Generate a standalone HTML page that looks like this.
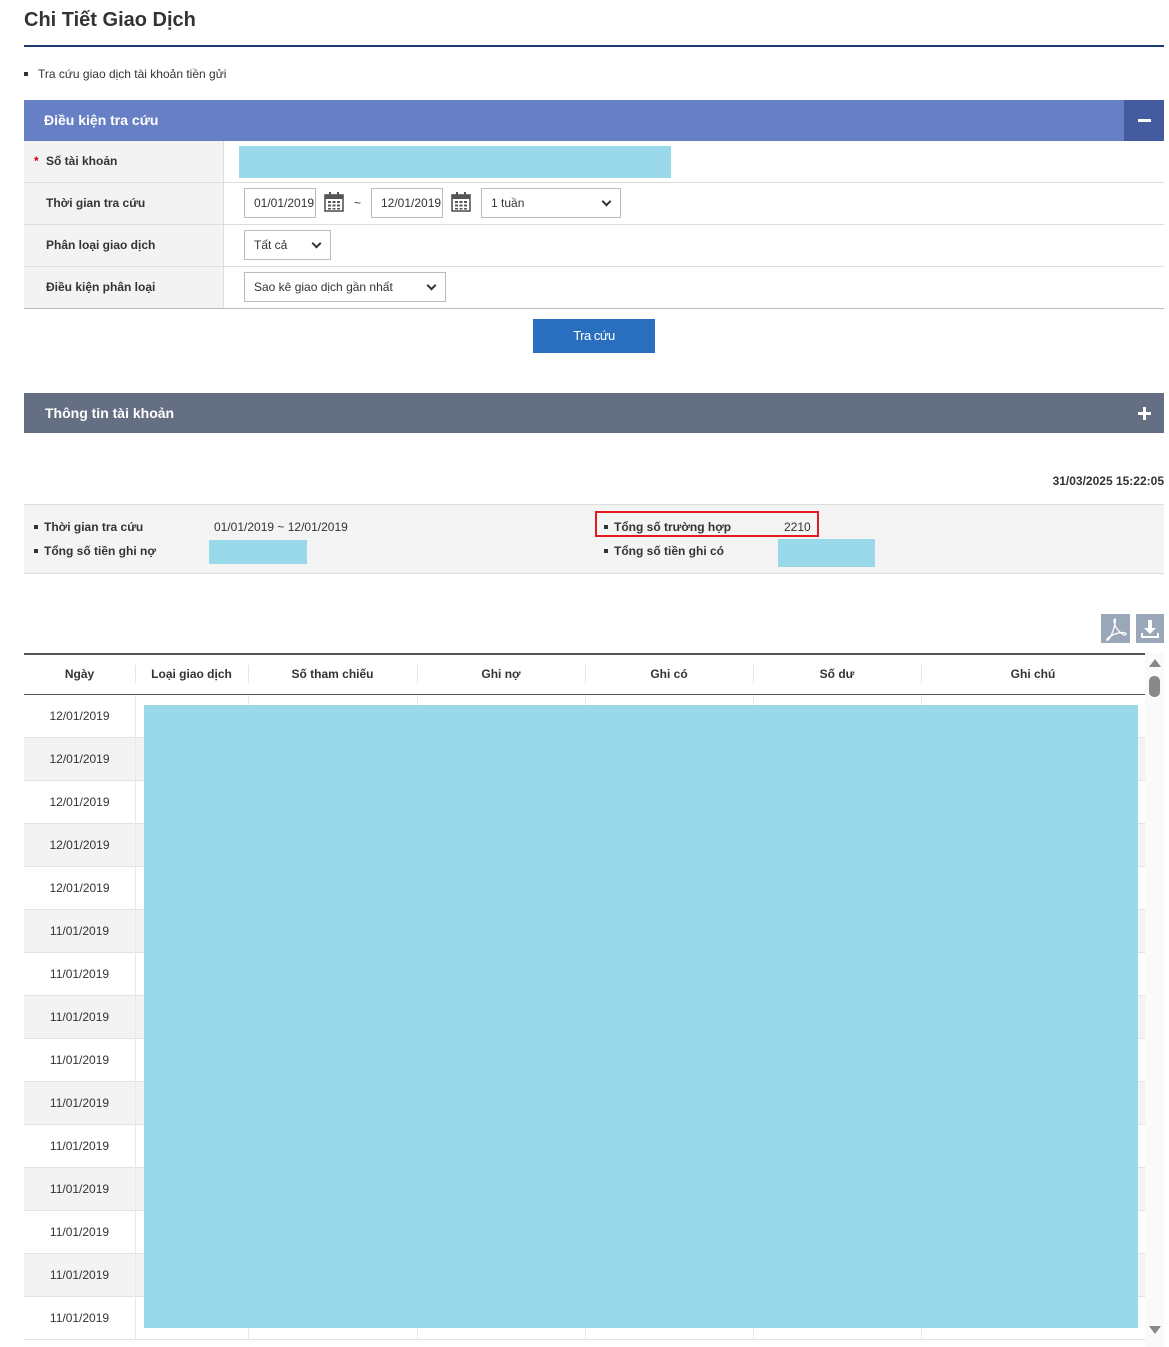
<!DOCTYPE html>
<html><head><meta charset="utf-8">
<style>
*{margin:0;padding:0;box-sizing:border-box}
body{width:1169px;height:1347px;background:#fff;font-family:"Liberation Sans",sans-serif;color:#333;position:relative;overflow:hidden;font-size:12px}
.a{position:absolute}
.b{font-weight:bold}
.sq{display:inline-block;width:4px;height:4px;background:#333;vertical-align:middle;margin-right:6px;position:relative;top:-1px}
.lbl{left:24px;width:200px;background:#f3f3f3;border-bottom:1px solid #ddd;border-right:1px solid #ddd;height:42px;line-height:40px;padding-left:22px;font-weight:bold;color:#333}
.row{left:224px;width:940px;border-bottom:1px solid #ddd;height:42px}
.inp{border:1px solid #bbb;height:30px;line-height:28px;padding-left:9px;background:#fff;font-size:12px;color:#333}
.chev{position:absolute;right:10px;top:9px;width:7px;height:7px;border-right:2px solid #333;border-bottom:2px solid #333;transform:rotate(45deg)}
.cal{width:20px;height:20px}
.th{top:653px;height:42px;line-height:42px;text-align:center;font-weight:bold;color:#333}
.sep{top:665px;width:1px;height:18px;background:#e5e5e5}
.r{left:24px;width:1121px;height:43px;border-bottom:1px solid #e2e2e2}
.d{left:24px;width:111px;text-align:center;line-height:43px;color:#333}
.vl{top:695px;width:1px;height:645px;background:#e8e8e8}
</style></head><body>
<div class="a" style="left:24px;top:9px;font-size:20px;font-weight:bold;color:#333">Chi Tiết Giao Dịch</div>
<div class="a" style="left:24px;top:45px;width:1140px;height:2px;background:#1f3a6e"></div>
<div class="a" style="left:24px;top:67px;font-size:12px;color:#333"><span class="sq" style="margin-right:10px"></span>Tra cứu giao dịch tài khoản tiền gửi</div>

<div class="a" style="left:24px;top:100px;width:1140px;height:41px;background:#677fc4"></div>
<div class="a b" style="left:44px;top:112px;color:#fff;font-size:14px">Điều kiện tra cứu</div>
<div class="a" style="left:1124px;top:100px;width:40px;height:41px;background:#445c9f"></div>
<div class="a" style="left:1138px;top:119px;width:13px;height:3px;background:#fff"></div>

<div class="a lbl" style="top:141px;padding-left:22px"><span style="color:#c00;position:absolute;left:10px">*</span>Số tài khoản</div>
<div class="a row" style="top:141px"></div>
<div class="a" style="left:239px;top:146px;width:432px;height:32px;background:#9ad9e9"></div>

<div class="a lbl" style="top:183px">Thời gian tra cứu</div>
<div class="a row" style="top:183px"></div>
<div class="a inp" style="left:244px;top:188px;width:72px">01/01/2019</div>
<svg class="a cal" style="left:324px;top:192px" viewBox="0 0 20 20"><rect x="1" y="3" width="18" height="16" fill="none" stroke="#555" stroke-width="1.6"/><rect x="1" y="3" width="18" height="4" fill="#555"/><rect x="5" y="0" width="2" height="5" fill="#555"/><rect x="13" y="0" width="2" height="5" fill="#555"/><g fill="#555"><rect x="4" y="9" width="3" height="2"/><rect x="8.5" y="9" width="3" height="2"/><rect x="13" y="9" width="3" height="2"/><rect x="4" y="12.5" width="3" height="2"/><rect x="8.5" y="12.5" width="3" height="2"/><rect x="13" y="12.5" width="3" height="2"/><rect x="4" y="16" width="3" height="1.5"/><rect x="8.5" y="16" width="3" height="1.5"/><rect x="13" y="16" width="3" height="1.5"/></g></svg>
<div class="a" style="left:354px;top:196px">~</div>
<div class="a inp" style="left:371px;top:188px;width:72px">12/01/2019</div>
<svg class="a cal" style="left:451px;top:192px" viewBox="0 0 20 20"><rect x="1" y="3" width="18" height="16" fill="none" stroke="#555" stroke-width="1.6"/><rect x="1" y="3" width="18" height="4" fill="#555"/><rect x="5" y="0" width="2" height="5" fill="#555"/><rect x="13" y="0" width="2" height="5" fill="#555"/><g fill="#555"><rect x="4" y="9" width="3" height="2"/><rect x="8.5" y="9" width="3" height="2"/><rect x="13" y="9" width="3" height="2"/><rect x="4" y="12.5" width="3" height="2"/><rect x="8.5" y="12.5" width="3" height="2"/><rect x="13" y="12.5" width="3" height="2"/><rect x="4" y="16" width="3" height="1.5"/><rect x="8.5" y="16" width="3" height="1.5"/><rect x="13" y="16" width="3" height="1.5"/></g></svg>
<div class="a inp" style="left:481px;top:188px;width:140px">1 tuần<span class="chev"></span></div>

<div class="a lbl" style="top:225px">Phân loại giao dịch</div>
<div class="a row" style="top:225px"></div>
<div class="a inp" style="left:244px;top:230px;width:87px">Tất cả<span class="chev"></span></div>

<div class="a lbl" style="top:267px">Điều kiện phân loại</div>
<div class="a row" style="top:267px"></div>
<div class="a inp" style="left:244px;top:272px;width:202px">Sao kê giao dịch gần nhất<span class="chev"></span></div>
<div class="a" style="left:24px;top:308px;width:1140px;height:1px;background:#bbb"></div>

<div class="a" style="left:533px;top:319px;width:122px;height:34px;background:#2a6ebf;color:#fff;text-align:center;line-height:34px;font-size:13px;letter-spacing:-0.5px">Tra cứu</div>

<div class="a" style="left:24px;top:393px;width:1140px;height:40px;background:#646f84"></div>
<div class="a b" style="left:45px;top:405px;color:#fff;font-size:14px">Thông tin tài khoản</div>
<div class="a" style="left:1138px;top:412px;width:13px;height:3px;background:#fff"></div>
<div class="a" style="left:1143px;top:407px;width:3px;height:13px;background:#fff"></div>

<div class="a b" style="right:5px;top:474px">31/03/2025 15:22:05</div>

<div class="a" style="left:24px;top:504px;width:1140px;height:70px;background:#f4f4f4;border-top:1px solid #ddd;border-bottom:1px solid #ddd"></div>
<div class="a b" style="left:34px;top:520px"><span class="sq"></span>Thời gian tra cứu</div>
<div class="a" style="left:214px;top:520px">01/01/2019 ~ 12/01/2019</div>
<div class="a b" style="left:34px;top:544px"><span class="sq"></span>Tổng số tiền ghi nợ</div>
<div class="a" style="left:209px;top:540px;width:98px;height:24px;background:#9ad9e9"></div>
<div class="a" style="left:595px;top:511px;width:224px;height:26px;border:2px solid #e21b23"></div>
<div class="a b" style="left:604px;top:520px"><span class="sq"></span>Tổng số trường hợp</div>
<div class="a" style="left:784px;top:520px">2210</div>
<div class="a b" style="left:604px;top:544px"><span class="sq"></span>Tổng số tiền ghi có</div>
<div class="a" style="left:778px;top:539px;width:97px;height:28px;background:#9ad9e9"></div>

<div class="a" style="left:1101px;top:614px;width:29px;height:29px;background:#9aa7b9"></div>
<svg class="a" style="left:1101px;top:614px" width="29" height="29" viewBox="0 0 29 29"><path d="M14 5c-2 0-1 6 3 11s8 6 8 4-6-2-11 0-9 5-8 6 4-3 6-9 3-12 2-12z" fill="none" stroke="#fff" stroke-width="1.3"/></svg>
<div class="a" style="left:1136px;top:614px;width:28px;height:29px;background:#9aa7b9"></div>
<svg class="a" style="left:1136px;top:614px" width="28" height="29" viewBox="0 0 28 29"><path d="M12 6h4v8h4l-6 6-6-6h4z" fill="#fff"/><path d="M6 19v4h16v-4" fill="none" stroke="#fff" stroke-width="2"/></svg>

<div class="a" style="left:24px;top:653px;width:1121px;height:2px;background:#555"></div>
<div class="a" style="left:24px;top:694px;width:1121px;height:1px;background:#555"></div>
<div class="a th" style="left:24px;width:111px">Ngày</div>
<div class="a th" style="left:135px;width:113px">Loại giao dịch</div>
<div class="a th" style="left:248px;width:169px">Số tham chiếu</div>
<div class="a th" style="left:417px;width:168px">Ghi nợ</div>
<div class="a th" style="left:585px;width:168px">Ghi có</div>
<div class="a th" style="left:753px;width:168px">Số dư</div>
<div class="a th" style="left:921px;width:224px">Ghi chú</div>
<div class="a sep" style="left:135px"></div><div class="a sep" style="left:248px"></div><div class="a sep" style="left:417px"></div><div class="a sep" style="left:585px"></div><div class="a sep" style="left:753px"></div><div class="a sep" style="left:921px"></div>

<div class="a r" style="top:695px"></div>
<div class="a r" style="top:738px;background:#f3f3f3"></div>
<div class="a r" style="top:781px"></div>
<div class="a r" style="top:824px;background:#f3f3f3"></div>
<div class="a r" style="top:867px"></div>
<div class="a r" style="top:910px;background:#f3f3f3"></div>
<div class="a r" style="top:953px"></div>
<div class="a r" style="top:996px;background:#f3f3f3"></div>
<div class="a r" style="top:1039px"></div>
<div class="a r" style="top:1082px;background:#f3f3f3"></div>
<div class="a r" style="top:1125px"></div>
<div class="a r" style="top:1168px;background:#f3f3f3"></div>
<div class="a r" style="top:1211px"></div>
<div class="a r" style="top:1254px;background:#f3f3f3"></div>
<div class="a r" style="top:1297px"></div>
<div class="a vl" style="left:135px"></div><div class="a vl" style="left:248px"></div><div class="a vl" style="left:417px"></div><div class="a vl" style="left:585px"></div><div class="a vl" style="left:753px"></div><div class="a vl" style="left:921px"></div>

<div class="a d" style="top:695px">12/01/2019</div>
<div class="a d" style="top:738px">12/01/2019</div>
<div class="a d" style="top:781px">12/01/2019</div>
<div class="a d" style="top:824px">12/01/2019</div>
<div class="a d" style="top:867px">12/01/2019</div>
<div class="a d" style="top:910px">11/01/2019</div>
<div class="a d" style="top:953px">11/01/2019</div>
<div class="a d" style="top:996px">11/01/2019</div>
<div class="a d" style="top:1039px">11/01/2019</div>
<div class="a d" style="top:1082px">11/01/2019</div>
<div class="a d" style="top:1125px">11/01/2019</div>
<div class="a d" style="top:1168px">11/01/2019</div>
<div class="a d" style="top:1211px">11/01/2019</div>
<div class="a d" style="top:1254px">11/01/2019</div>
<div class="a d" style="top:1297px">11/01/2019</div>

<div class="a" style="left:144px;top:705px;width:994px;height:623px;background:#9ad9e9"></div>

<div class="a" style="left:1145px;top:653px;width:19px;height:694px;background:#fafafa"></div>
<div class="a" style="left:1149px;top:659px;width:0;height:0;border-left:6px solid transparent;border-right:6px solid transparent;border-bottom:8px solid #888"></div>
<div class="a" style="left:1149px;top:676px;width:11px;height:21px;border-radius:5px;background:#888"></div>
<div class="a" style="left:1149px;top:1326px;width:0;height:0;border-left:6px solid transparent;border-right:6px solid transparent;border-top:8px solid #888"></div>
</body></html>
